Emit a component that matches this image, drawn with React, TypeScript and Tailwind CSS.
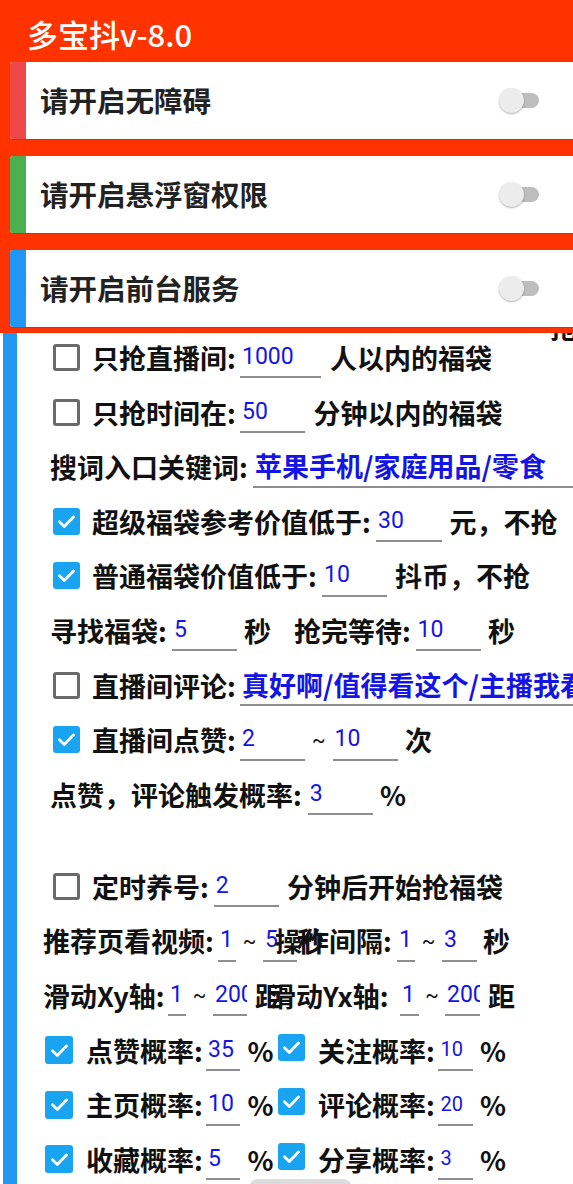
import React from "react";

function CB({ checked, cls = "" }: { checked?: boolean; cls?: string }) {
  if (checked) {
    return (
      <span className={`flex h-[27px] w-[27px] shrink-0 items-center justify-center rounded-[3px] bg-[#19a4f1] ${cls}`}>
        <svg width="27" height="27" viewBox="0 0 27 27">
          <path d="M6.5 13.8 L11.3 18.4 L20.5 9" stroke="white" strokeWidth="2.8" fill="none" strokeLinecap="round" strokeLinejoin="round" />
        </svg>
      </span>
    );
  }
  return <span className={`h-[27px] w-[27px] shrink-0 rounded-[3px] border-[3px] border-[#6a6a6a] bg-white ${cls}`} />;
}

function L({ t, w = "", cls = "" }: { t: React.ReactNode; w?: string; cls?: string }) {
  return <span className={`shrink-0 whitespace-nowrap ${w} ${cls}`}>{t}</span>;
}

function I({ v, w, cjk, small }: { v: string; w: string; cjk?: boolean; small?: boolean }) {
  const f = cjk
    ? "text-[27px] font-bold"
    : small
    ? "font-['Roboto',sans-serif] text-[20px] font-normal"
    : "font-['Roboto',sans-serif] text-[23px] font-normal";
  return (
    <span className={`flex h-[42px] shrink-0 items-center overflow-hidden whitespace-nowrap border-b-2 border-[#8e8e8e] pl-[2px] text-[#1414e6] ${w} ${f}`}>
      {v}
    </span>
  );
}

function T({ w }: { w: string }) {
  return (
    <span className={`shrink-0 text-center font-['Roboto',sans-serif] text-[20px] font-normal ${w}`}>~</span>
  );
}

function Row({ pl, children }: { pl: string; children: React.ReactNode }) {
  return (
    <div className={`flex h-[54.6px] shrink-0 items-center whitespace-nowrap text-[27px] font-bold leading-none text-[#111] ${pl}`}>
      {children}
    </div>
  );
}

function Card({ bar, text }: { bar: string; text: string }) {
  return (
    <div className="flex h-[77px] w-[570px] items-center overflow-hidden rounded-[3px] bg-white shadow-[0_1px_1px_rgba(0,0,0,0.15)]">
      <div className={`h-full w-[16px] shrink-0 ${bar}`} />
      <div className="flex flex-1 items-center pl-[14px] text-[28.5px] font-bold leading-none text-[#222]">{text}</div>
      <div className="relative mr-[41px] h-[25px] w-[40px] shrink-0">
        <div className="absolute right-0 top-[5px] h-[15px] w-[36px] rounded-full bg-[#bdbdbd]" />
        <div className="absolute left-0 top-0 h-[25px] w-[25px] rounded-full bg-[#ececec] shadow-[0_1px_2px_rgba(0,0,0,0.3)]" />
      </div>
    </div>
  );
}

function ProbRow({ a, av, b, bv }: { a: string; av: string; b: string; bv: string }) {
  return (
    <Row pl="pl-[28px]">
      <CB checked cls="w-[28px] h-[28px]" />
      <L t={a} w="w-[120px] ml-[13px]" />
      <I v={av} w="w-[34px]" />
      <L t="%" w="w-[31px] ml-[7.4px]" />
      <CB checked cls="mb-[6px]" />
      <L t={b} w="w-[120.6px] ml-[12.5px]" />
      <I v={bv} w="w-[35px]" small />
      <L t="%" w="ml-[6.4px]" />
    </Row>
  );
}

export default function App() {
  return (
    <div className="relative h-[1184px] w-[573px] overflow-hidden bg-white font-['Noto_Sans_CJK_SC','Noto_Sans',sans-serif]">
      <div className="flex min-h-[1184px]">
        <div className="ml-[3px] w-[14px] shrink-0 bg-[#2196f3]" />
        <div className="flex min-w-0 flex-1 flex-col">
          <div className="flex h-[330.2px] shrink-0 items-end justify-end">
            <span className="mb-[-11px] mr-[-4px] text-[27px] font-bold leading-none text-[#111]">抢</span>
          </div>

          <Row pl="pl-[36px]">
            <CB />
            <L t="只抢直播间:" w="w-[148px] ml-[12px]" />
            <I v="1000" w="w-[81px]" />
            <L t="人以内的福袋" w="ml-[9px]" />
          </Row>
          <Row pl="pl-[36px]">
            <CB />
            <L t="只抢时间在:" w="w-[148px] ml-[12px]" />
            <I v="50" w="w-[65px]" />
            <L t="分钟以内的福袋" w="ml-[8.6px]" />
          </Row>
          <Row pl="pl-[33px]">
            <L t="搜词入口关键词:" w="w-[203px]" />
            <I v="苹果手机/家庭用品/零食" w="w-[400px]" cjk />
          </Row>
          <Row pl="pl-[36px]">
            <CB checked />
            <L t="超级福袋参考价值低于:" w="w-[284px] ml-[12px]" />
            <I v="30" w="w-[66px]" />
            <L t="元，不抢" w="ml-[7.6px]" />
          </Row>
          <Row pl="pl-[36px]">
            <CB checked />
            <L t="普通福袋价值低于:" w="w-[230px] ml-[12px]" />
            <I v="10" w="w-[65px]" />
            <L t="抖币，不抢" w="ml-[8px]" />
          </Row>
          <Row pl="pl-[33px]">
            <L t="寻找福袋:" w="w-[122px]" />
            <I v="5" w="w-[65px]" />
            <L t="秒" w="w-[50px] ml-[7px]" />
            <L t="抢完等待:" w="w-[121.6px]" />
            <I v="10" w="w-[65px]" />
            <L t="秒" w="ml-[7.4px]" />
          </Row>
          <Row pl="pl-[36px]">
            <CB />
            <L t="直播间评论:" w="w-[148px] ml-[12px]" />
            <I v="真好啊/值得看这个/主播我看这个" w="w-[400px]" cjk />
          </Row>
          <Row pl="pl-[36px]">
            <CB checked />
            <L t="直播间点赞:" w="w-[148px] ml-[12px]" />
            <I v="2" w="w-[65px]" />
            <T w="w-[27.6px]" />
            <I v="10" w="w-[65px]" />
            <L t="次" w="ml-[7.4px]" />
          </Row>
          <Row pl="pl-[33px]">
            <L t="点赞，评论触发概率:" w="w-[257.7px]" />
            <I v="3" w="w-[65px]" />
            <L t="%" w="ml-[7.3px]" />
          </Row>

          <div className="h-[37.4px] shrink-0" />

          <Row pl="pl-[36px]">
            <CB />
            <L t="定时养号:" w="w-[121.8px] ml-[12px]" />
            <I v="2" w="w-[65px]" />
            <L t="分钟后开始抢福袋" w="ml-[8.2px]" />
          </Row>
          <Row pl="pl-[26px]">
            <L t="推荐页看视频:" w="w-[175px]" />
            <I v="1" w="w-[18px]" />
            <T w="w-[27px]" />
            <I v="5" w="w-[34px]" />
            <span className="ml-[-22px] flex w-[122px] shrink-0 whitespace-nowrap">
              <span>操</span>
              <span className="relative inline-block">
                作<span className="absolute left-[-5px] top-0">秒</span>
              </span>
              <span>间隔:</span>
            </span>
            <I v="1" w="w-[18px]" />
            <T w="w-[27px]" />
            <I v="3" w="w-[35px]" />
            <L t="秒" w="ml-[6px]" />
          </Row>
          <Row pl="pl-[26px]">
            <L t="滑动Xy轴:" w="w-[125px]" />
            <I v="1" w="w-[18px]" />
            <T w="w-[27px]" />
            <I v="200" w="w-[34px]" />
            <L t="距" w="ml-[8px]" />
            <L t="滑动Yx轴:" w="w-[131px] ml-[-13px]" />
            <I v="1" w="w-[19px]" />
            <T w="w-[26px]" />
            <I v="200" w="w-[34.5px]" />
            <L t="距" w="ml-[8.5px]" />
          </Row>
          <ProbRow a="点赞概率:" av="35" b="关注概率:" bv="10" />
          <ProbRow a="主页概率:" av="10" b="评论概率:" bv="20" />
          <ProbRow a="收藏概率:" av="5" b="分享概率:" bv="3" />
          <div className="ml-[232px] mt-[-7.5px] h-[12px] w-[103px] shrink-0 rounded-t-[9px] bg-[#dcdcdc]" />
        </div>
      </div>

      <div className="absolute inset-x-0 top-0 bg-[#ff3300] pb-[6px]">
        <div className="flex h-[62px] items-center pl-[27px] pt-[4px] text-[31px] font-medium leading-none text-white">
          多宝抖v-8.0
        </div>
        <div className="flex flex-col gap-[17px] pl-[10px]">
          <Card bar="bg-[#ef4848]" text="请开启无障碍" />
          <Card bar="bg-[#4caf50]" text="请开启悬浮窗权限" />
          <Card bar="bg-[#2196f3]" text="请开启前台服务" />
        </div>
      </div>
    </div>
  );
}
